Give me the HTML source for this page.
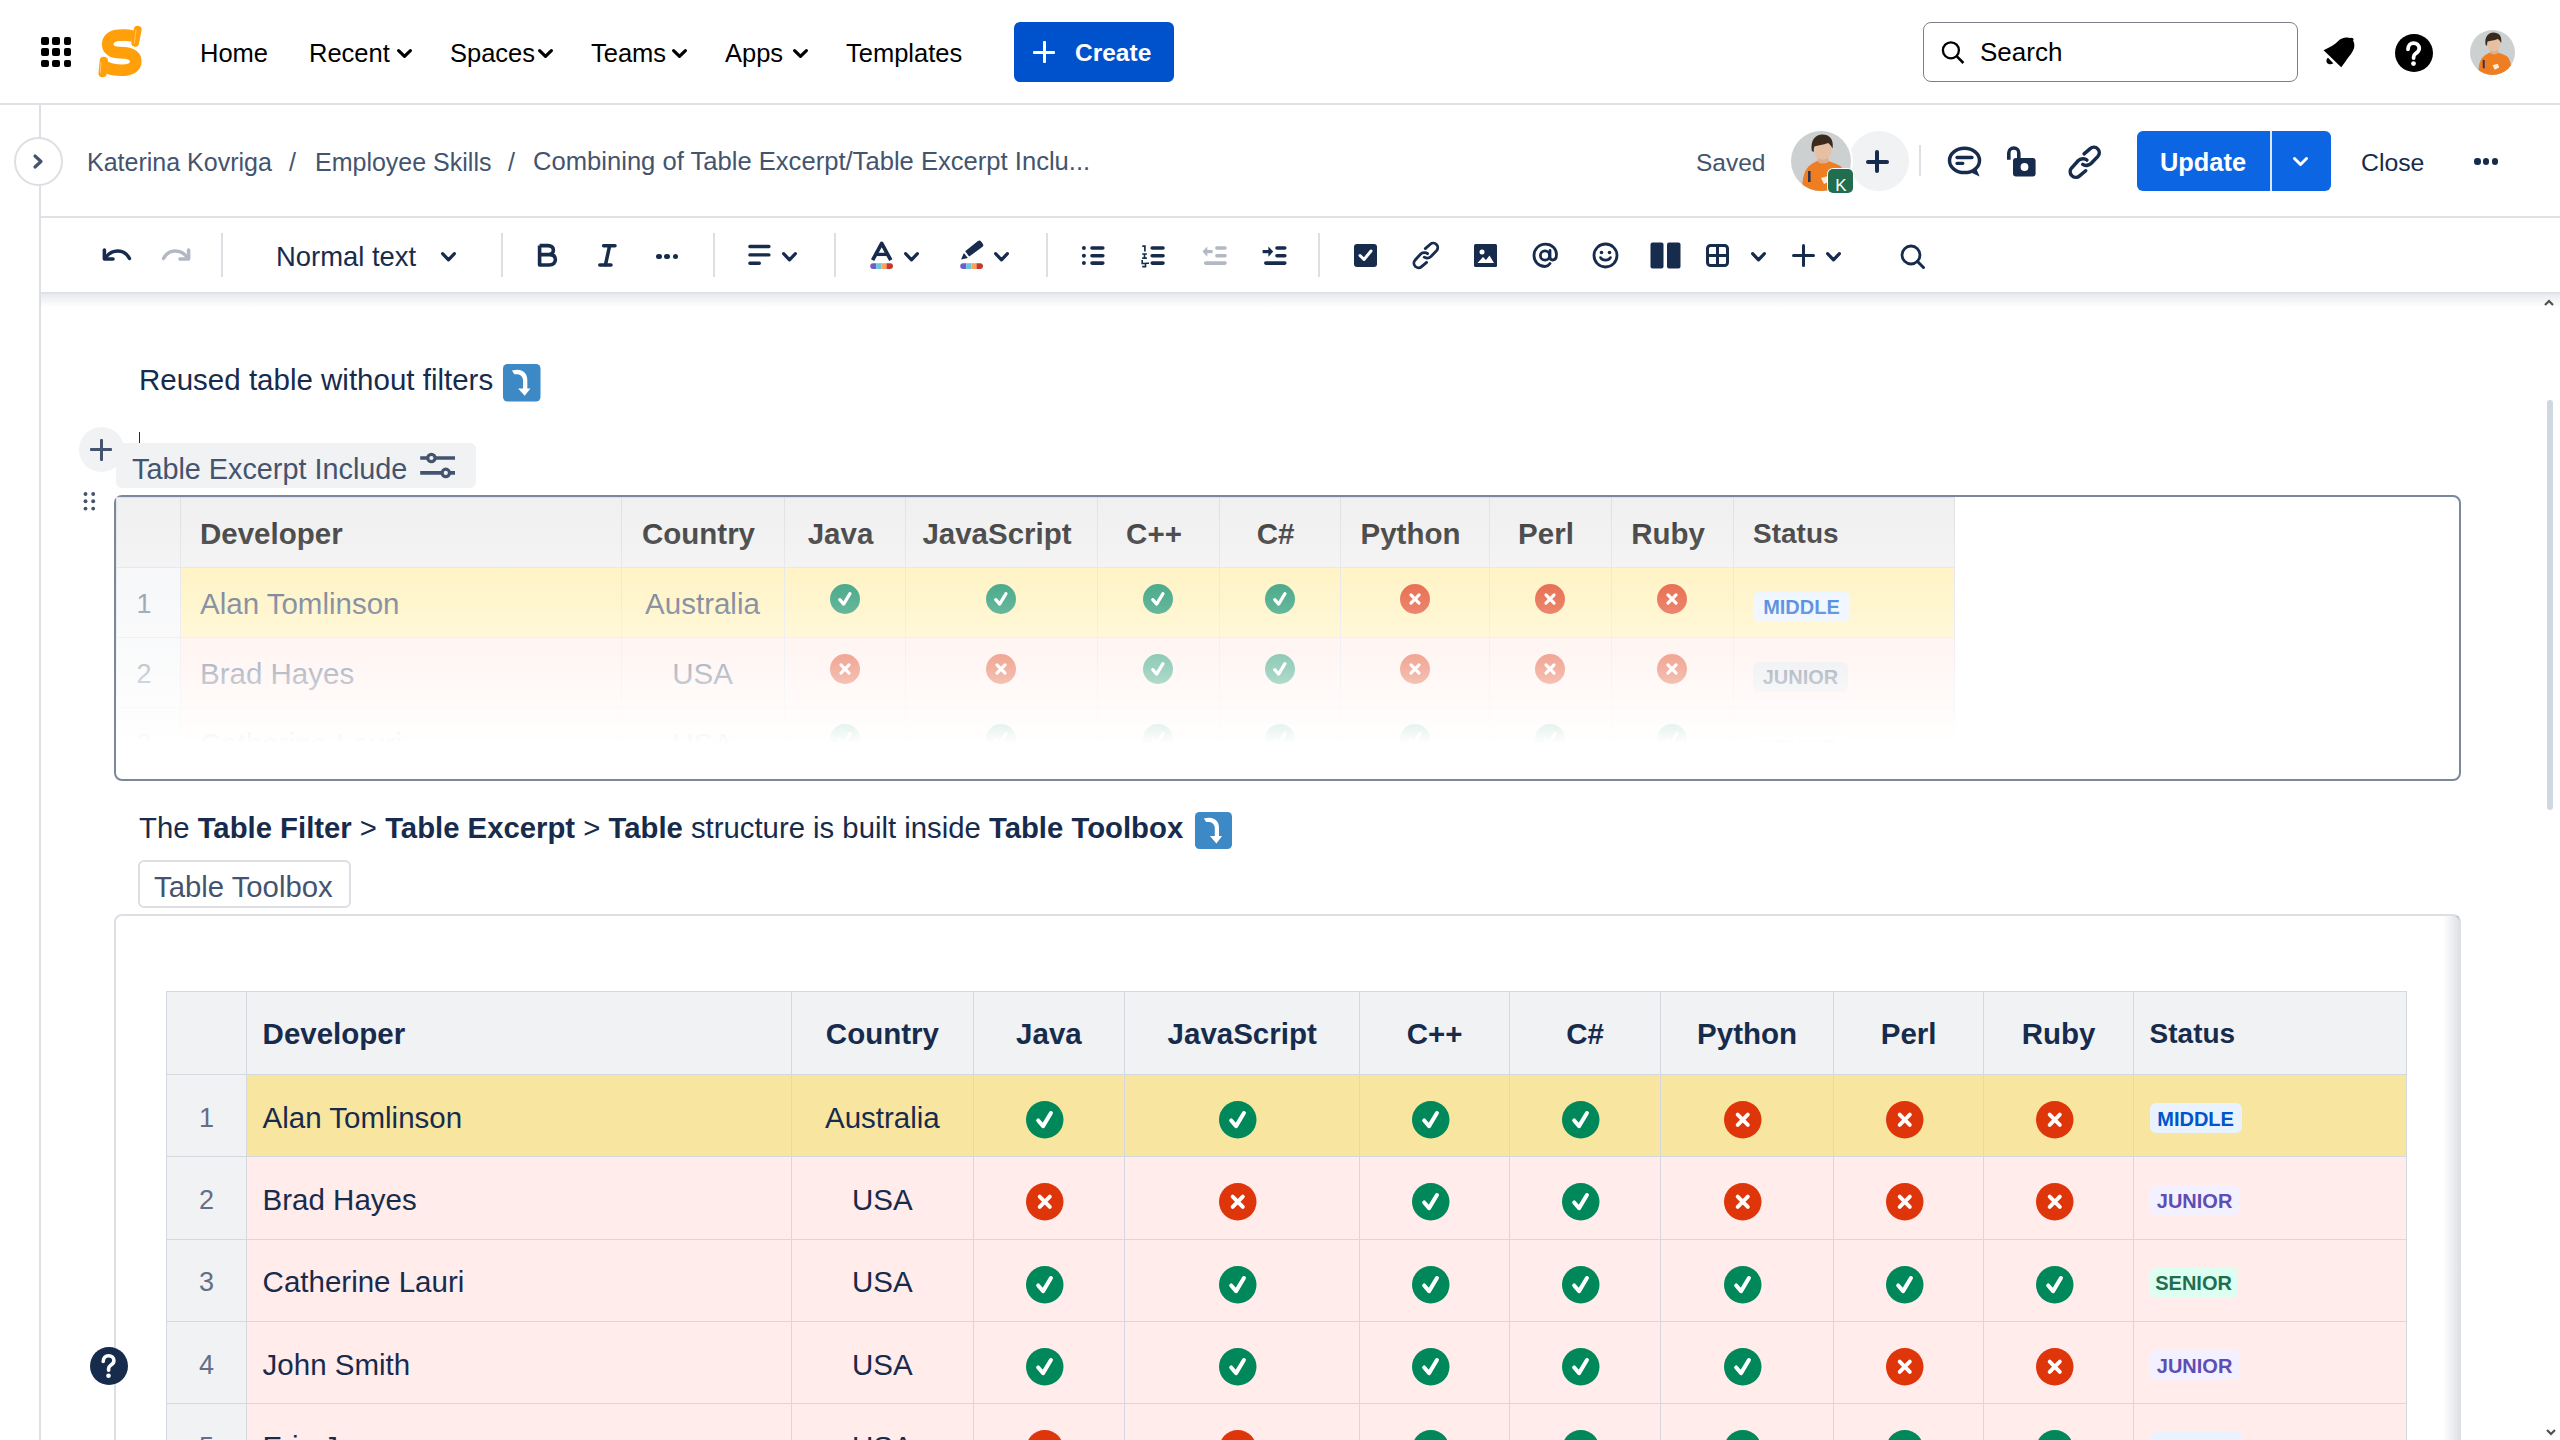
<!DOCTYPE html><html><head><meta charset="utf-8"><style>
*{box-sizing:border-box}
html,body{margin:0;padding:0;width:2560px;height:1440px;overflow:hidden;background:#fff;font-family:"Liberation Sans", sans-serif}
.t{position:absolute;white-space:pre}
.a{position:absolute}
svg{position:absolute;overflow:visible}
</style></head><body>
<div class="a" style="left:0;top:0;width:2560px;height:104px;background:#fff"></div>
<div class="a" style="left:0;top:103px;width:2560px;height:2px;background:#dfe1e6"></div>
<div class="a" style="left:41.0px;top:37.0px;width:7.5px;height:7.5px;border-radius:2px;background:#000"></div>
<div class="a" style="left:41.0px;top:48.3px;width:7.5px;height:7.5px;border-radius:2px;background:#000"></div>
<div class="a" style="left:41.0px;top:59.6px;width:7.5px;height:7.5px;border-radius:2px;background:#000"></div>
<div class="a" style="left:52.3px;top:37.0px;width:7.5px;height:7.5px;border-radius:2px;background:#000"></div>
<div class="a" style="left:52.3px;top:48.3px;width:7.5px;height:7.5px;border-radius:2px;background:#000"></div>
<div class="a" style="left:52.3px;top:59.6px;width:7.5px;height:7.5px;border-radius:2px;background:#000"></div>
<div class="a" style="left:63.6px;top:37.0px;width:7.5px;height:7.5px;border-radius:2px;background:#000"></div>
<div class="a" style="left:63.6px;top:48.3px;width:7.5px;height:7.5px;border-radius:2px;background:#000"></div>
<div class="a" style="left:63.6px;top:59.6px;width:7.5px;height:7.5px;border-radius:2px;background:#000"></div>
<svg style="left:92px;top:22px" width="56" height="60" viewBox="92 22 56 60"><g fill="none" stroke="#ff9f0a" stroke-linecap="round"><path d="M131 35.8 C127 34.5 123 35.2 119.5 35.2 C111 35.2 107.7 39.5 107.7 44.6 C107.7 50.2 113 52.6 120 52.6 C128 52.6 135.8 54.5 135.8 61.2 C135.8 67.2 130 70.2 122 70.2 C115.5 70.2 111 69.5 107 67.5" stroke-width="11.6"/><path d="M137.7 29.8 L135.2 42.8" stroke-width="7.8"/><path d="M103.8 60.8 L102.6 73.2" stroke-width="8.2"/></g><path d="M136.2 29 L134.2 44" stroke="#fff" stroke-width=".6" opacity=".7"/><path d="M101 62 L100.3 73" stroke="#fff" stroke-width=".6" opacity=".7"/></svg>
<div class="t" style="left:200px;top:41.41px;font-size:25.5px;line-height:25.5px;color:#000;font-weight:400;">Home</div>
<div class="t" style="left:309px;top:41.41px;font-size:25.5px;line-height:25.5px;color:#000;font-weight:400;">Recent</div>
<svg style="left:397px;top:49px" width="15" height="9" viewBox="0 0 15 9"><path d="M1.6 1.6 L7.5 7.4 L13.4 1.6" fill="none" stroke="#000" stroke-width="3.2" stroke-linecap="round" stroke-linejoin="round"/></svg>
<div class="t" style="left:450px;top:41.41px;font-size:25.5px;line-height:25.5px;color:#000;font-weight:400;">Spaces</div>
<svg style="left:538px;top:49px" width="15" height="9" viewBox="0 0 15 9"><path d="M1.6 1.6 L7.5 7.4 L13.4 1.6" fill="none" stroke="#000" stroke-width="3.2" stroke-linecap="round" stroke-linejoin="round"/></svg>
<div class="t" style="left:591px;top:41.41px;font-size:25.5px;line-height:25.5px;color:#000;font-weight:400;">Teams</div>
<svg style="left:672px;top:49px" width="15" height="9" viewBox="0 0 15 9"><path d="M1.6 1.6 L7.5 7.4 L13.4 1.6" fill="none" stroke="#000" stroke-width="3.2" stroke-linecap="round" stroke-linejoin="round"/></svg>
<div class="t" style="left:725px;top:41.41px;font-size:25.5px;line-height:25.5px;color:#000;font-weight:400;">Apps</div>
<svg style="left:793px;top:49px" width="15" height="9" viewBox="0 0 15 9"><path d="M1.6 1.6 L7.5 7.4 L13.4 1.6" fill="none" stroke="#000" stroke-width="3.2" stroke-linecap="round" stroke-linejoin="round"/></svg>
<div class="t" style="left:846px;top:41.41px;font-size:25.5px;line-height:25.5px;color:#000;font-weight:400;">Templates</div>
<div class="a" style="left:1014px;top:22px;width:160px;height:60px;border-radius:6px;background:#0052cc"></div>
<div class="a" style="left:1033px;top:50.5px;width:22px;height:3px;background:#fff;border-radius:1px"></div>
<div class="a" style="left:1042.5px;top:41px;width:3px;height:22px;background:#fff;border-radius:1px"></div>
<div class="t" style="left:1075px;top:41.26px;font-size:24.5px;line-height:24.5px;color:#fff;font-weight:700;">Create</div>
<div class="a" style="left:1923px;top:22px;width:375px;height:60px;border:1.5px solid #7a7f87;border-radius:8px;background:#fff"></div>
<svg style="left:1941px;top:40px" width="26" height="26" viewBox="0 0 26 26"><circle cx="9.9" cy="10.3" r="8" fill="none" stroke="#000" stroke-width="2.3"/><path d="M15.6 16.2 L22.4 23" stroke="#000" stroke-width="2.6" stroke-linecap="butt"/></svg>
<div class="t" style="left:1980px;top:39.49px;font-size:26px;line-height:26px;color:#000;font-weight:400;">Search</div>
<svg style="left:2318px;top:32px" width="42" height="40" viewBox="2318 32 42 40"><path d="M2323.6 50.2 C2330 47.2 2334.5 44.8 2338 41.2 C2341 38.4 2345 37 2348.5 37.8 L2350.8 37.9 L2353 40.4 C2354.7 43.2 2355 47 2352.8 51 C2350.5 55.2 2347.5 58 2345.5 61.5 L2341.2 67.3 Z" fill="#000"/><circle cx="2351.6" cy="39.6" r="1.9" fill="#000"/><path d="M2328 57.8 L2333.3 63.2 C2331 65 2327.8 64.6 2326.7 62.2 C2326 60.4 2326.6 58.8 2328 57.8 Z" fill="#000"/></svg>
<div class="a" style="left:2394.5px;top:33.5px;width:38px;height:38px;border-radius:50%;background:#000"></div>
<svg style="left:2394px;top:33px" width="40" height="40" viewBox="2394 33 40 40"><path d="M2408 49.3 C2408 45.5 2410.5 43.1 2413.6 43.1 C2416.8 43.1 2419.2 45.5 2419.2 48.6 C2419.2 51.2 2417.5 52.4 2415.6 53.6 C2414.2 54.5 2413.6 55.3 2413.6 57.2 L2413.6 58" fill="none" stroke="#fff" stroke-width="3.8" stroke-linecap="round"/><circle cx="2413.5" cy="63.6" r="2.4" fill="#fff"/></svg>
<svg style="left:2469.5px;top:29.5px" width="45" height="45" viewBox="0 0 60 60">
<defs><clipPath id="cp2492"><circle cx="30" cy="30" r="30"/></clipPath></defs>
<g clip-path="url(#cp2492)"><rect width="60" height="60" fill="#cdd0d1"/>
<path d="M11 62 C11 48 13 38 20 33.5 C23 31.5 26 29.5 29 29.5 L37 30 C41 31 46 33 50 35.5 C54 40 56 50 57 62 Z" fill="#ef7d22"/>
<path d="M26.5 24 L37 24 L37.5 31 C34 33 30 33 27 31 Z" fill="#dfae8c"/>
<ellipse cx="31.8" cy="19.2" rx="8.6" ry="9.6" fill="#e6c0a2"/>
<path d="M20.8 20 C19 8.5 25 3.4 31.2 3.4 C38.5 3.4 43 8 41.6 17.5 C40.5 15.5 39 13.2 37 12 C32 13.8 27 14.6 23.4 15.4 C22.8 17 22.8 18.8 22.8 21 Z" fill="#3a2a1e"/>
<rect x="17" y="40" width="2.6" height="11" fill="#2b3552"/>
<path d="M30 47 L37 45 L39 50 L33 53 Z" fill="#fff" opacity=".85"/>
</g></svg>
<div class="a" style="left:39px;top:105px;width:2px;height:1335px;background:#dcdfe4"></div>
<div class="a" style="left:13.5px;top:137px;width:49px;height:49px;border-radius:50%;border:2px solid #dcdfe4;background:#fff"></div>
<svg style="left:33px;top:154px" width="10" height="15" viewBox="0 0 10 15"><path d="M2 2 L8 7.5 L2 13" fill="none" stroke="#44546f" stroke-width="3.2" stroke-linecap="round" stroke-linejoin="round"/></svg>
<div class="a" style="left:41px;top:216px;width:2519px;height:2px;background:#dfe1e6"></div>
<div class="t" style="left:87px;top:149.84px;font-size:25px;line-height:25px;color:#44546f;font-weight:400;">Katerina Kovriga</div>
<div class="t" style="left:289px;top:149.84px;font-size:25px;line-height:25px;color:#44546f;font-weight:400;">/</div>
<div class="t" style="left:315px;top:149.84px;font-size:25px;line-height:25px;color:#44546f;font-weight:400;">Employee Skills</div>
<div class="t" style="left:508px;top:149.84px;font-size:25px;line-height:25px;color:#44546f;font-weight:400;">/</div>
<div class="t" style="left:533px;top:149.33px;font-size:25.6px;line-height:25.6px;color:#44546f;font-weight:400;">Combining of Table Excerpt/Table Excerpt Inclu...</div>
<div class="t" style="left:1696px;top:150.76px;font-size:24.5px;line-height:24.5px;color:#44546f;font-weight:400;">Saved</div>
<div class="a" style="left:1849px;top:131px;width:60px;height:60px;border-radius:50%;background:#f1f2f4"></div>
<div class="a" style="left:1866px;top:159.5px;width:22.5px;height:4px;background:#172b4d;border-radius:2px"></div>
<div class="a" style="left:1875.3px;top:150.2px;width:4px;height:22.5px;background:#172b4d;border-radius:2px"></div>
<div class="a" style="left:1789.0px;top:129.0px;width:64px;height:64px;border-radius:50%;background:#fff"></div><svg style="left:1791.0px;top:131.0px" width="60" height="60" viewBox="0 0 60 60">
<defs><clipPath id="cp1821"><circle cx="30" cy="30" r="30"/></clipPath></defs>
<g clip-path="url(#cp1821)"><rect width="60" height="60" fill="#cdd0d1"/>
<path d="M11 62 C11 48 13 38 20 33.5 C23 31.5 26 29.5 29 29.5 L37 30 C41 31 46 33 50 35.5 C54 40 56 50 57 62 Z" fill="#ef7d22"/>
<path d="M26.5 24 L37 24 L37.5 31 C34 33 30 33 27 31 Z" fill="#dfae8c"/>
<ellipse cx="31.8" cy="19.2" rx="8.6" ry="9.6" fill="#e6c0a2"/>
<path d="M20.8 20 C19 8.5 25 3.4 31.2 3.4 C38.5 3.4 43 8 41.6 17.5 C40.5 15.5 39 13.2 37 12 C32 13.8 27 14.6 23.4 15.4 C22.8 17 22.8 18.8 22.8 21 Z" fill="#3a2a1e"/>
<rect x="17" y="40" width="2.6" height="11" fill="#2b3552"/>
<path d="M30 47 L37 45 L39 50 L33 53 Z" fill="#fff" opacity=".85"/>
</g></svg>
<div class="a" style="left:1827px;top:168px;width:27px;height:26px;border-radius:6px;background:#fff"></div>
<div class="a" style="left:1828px;top:169px;width:25px;height:24px;border-radius:5px;background:#216e4e"></div>
<div class="t" style="left:1830.8px;width:20px;text-align:center;top:176.61px;font-size:17px;line-height:17px;color:#fff;font-weight:400;">K</div>
<div class="a" style="left:1918.5px;top:145px;width:2px;height:31px;background:#dcdfe4"></div>
<svg style="left:1940px;top:140px" width="46" height="42" viewBox="1940 140 46 42"><ellipse cx="1964.5" cy="160.4" rx="15" ry="12.2" fill="none" stroke="#172b4d" stroke-width="3.5"/><path d="M1969.5 171.8 L1979.6 176.6 L1976 168" fill="#172b4d"/><path d="M1957 157.5 H1972 M1957 163.3 H1962.8" stroke="#172b4d" stroke-width="3.3" stroke-linecap="round"/></svg>
<svg style="left:2000px;top:140px" width="40" height="42" viewBox="2000 140 40 42"><path d="M2008.8 159.8 V153 A5 5 0 0 1 2018.8 153 V158.5" fill="none" stroke="#172b4d" stroke-width="3.6"/><rect x="2013" y="157.9" width="22.6" height="18.6" rx="3" fill="#172b4d"/><circle cx="2024.5" cy="167" r="3.9" fill="#fff"/></svg>
<svg style="left:2062.5px;top:140.8px" width="43.92" height="41.48" viewBox="0 0 36 34"><g fill="none" stroke="#172b4d" stroke-width="2.9" stroke-linecap="round">
<path d="M17.3 10.6 L22.3 6.2 A4.5 4.5 0 0 1 28.6 12.6 L23.2 18.3 C21.2 20.3 18 20.5 16.2 19.2"/>
<path d="M18.6 24.4 L13.6 28.6 A4.6 4.6 0 0 1 7.2 22 L12.4 16.2 C14.4 14.2 17.8 14 19.6 15.6"/></g></svg>
<div class="a" style="left:2137px;top:131px;width:194px;height:60px;border-radius:6px;background:#0c66e4"></div>
<div class="a" style="left:2269.5px;top:131px;width:2px;height:60px;background:#fff;opacity:.85"></div>
<div class="t" style="left:2160px;top:150.00px;font-size:25.4px;line-height:25.4px;color:#fff;font-weight:700;">Update</div>
<svg style="left:2293px;top:157px" width="15" height="9" viewBox="0 0 15 9"><path d="M1.5 1.5 L7.5 7.5 L13.5 1.5" fill="none" stroke="#fff" stroke-width="3" stroke-linecap="round" stroke-linejoin="round"/></svg>
<div class="t" style="left:2361px;top:150.51px;font-size:24.8px;line-height:24.8px;color:#172b4d;font-weight:400;">Close</div>
<div class="a" style="left:2474.0px;top:158px;width:6.5px;height:6.5px;border-radius:50%;background:#172b4d"></div>
<div class="a" style="left:2482.8px;top:158px;width:6.5px;height:6.5px;border-radius:50%;background:#172b4d"></div>
<div class="a" style="left:2491.6px;top:158px;width:6.5px;height:6.5px;border-radius:50%;background:#172b4d"></div>
<div class="a" style="left:41px;top:292px;width:2519px;height:2px;background:#dfe1e6"></div>
<div class="a" style="left:41px;top:294px;width:2519px;height:13px;background:linear-gradient(#e9eaee,rgba(255,255,255,0))"></div>
<div class="a" style="left:221px;top:233px;width:2px;height:44px;background:#dcdfe4"></div>
<div class="a" style="left:501px;top:233px;width:2px;height:44px;background:#dcdfe4"></div>
<div class="a" style="left:712.5px;top:233px;width:2px;height:44px;background:#dcdfe4"></div>
<div class="a" style="left:834px;top:233px;width:2px;height:44px;background:#dcdfe4"></div>
<div class="a" style="left:1046px;top:233px;width:2px;height:44px;background:#dcdfe4"></div>
<div class="a" style="left:1318px;top:233px;width:2px;height:44px;background:#dcdfe4"></div>
<svg style="left:101px;top:242px" width="32" height="22" viewBox="0 0 32 22">
<path d="M5.5 14.5 C11 7.5 23 6 28.5 16.5" fill="none" stroke="#172b4d" stroke-width="3.4" stroke-linecap="round"/><path d="M3.4 8 L3.4 17 L12 17" fill="none" stroke="#172b4d" stroke-width="3.6" stroke-linecap="round" stroke-linejoin="round"/></svg>
<svg style="left:160px;top:242px" width="32" height="22" viewBox="0 0 32 22">
<path d="M26.5 14.5 C21 7.5 9 6 3.5 16.5" fill="none" stroke="#b3b9c4" stroke-width="3.4" stroke-linecap="round"/><path d="M28.6 8 L28.6 17 L20 17" fill="none" stroke="#b3b9c4" stroke-width="3.6" stroke-linecap="round" stroke-linejoin="round"/></svg>
<div class="t" style="left:276px;top:242.81px;font-size:27.4px;line-height:27.4px;color:#172b4d;font-weight:400;">Normal text</div>
<svg style="left:441px;top:252px" width="15" height="9.5" viewBox="0 0 15 9.5"><path d="M1.6 1.6 L7.5 7.9 L13.4 1.6" fill="none" stroke="#172b4d" stroke-width="3.2" stroke-linecap="round" stroke-linejoin="round"/></svg>
<svg style="left:536px;top:242px" width="22" height="26" viewBox="0 0 22 26"><path d="M3.6 3.6 L3.6 23 L13 23 C17.5 23 19.4 20.5 19.4 17.6 C19.4 14.6 17.3 12.6 13.5 12.6 L3.6 12.6 M3.6 3.6 L12 3.6 C15.6 3.6 17.4 5.6 17.4 8 C17.4 10.6 15.6 12.6 12.5 12.6" fill="none" stroke="#172b4d" stroke-width="3.6" stroke-linejoin="round"/></svg>
<svg style="left:596px;top:242px" width="23" height="26" viewBox="0 0 23 26"><path d="M7.6 3.8 H19 M3.8 23.1 H15 M13.6 3.8 L9.4 23.1" fill="none" stroke="#172b4d" stroke-width="3.5" stroke-linecap="round"/></svg>
<div class="a" style="left:656.0px;top:253.6px;width:5.6px;height:5.6px;border-radius:50%;background:#172b4d"></div>
<div class="a" style="left:664.3px;top:253.6px;width:5.6px;height:5.6px;border-radius:50%;background:#172b4d"></div>
<div class="a" style="left:672.6px;top:253.6px;width:5.6px;height:5.6px;border-radius:50%;background:#172b4d"></div>
<svg style="left:747px;top:245px" width="26" height="22" viewBox="0 0 26 22">
<path d="M2.9 1.5 H21.9 M2.9 9.9 H21.9 M2.9 18.2 H12.3" stroke="#172b4d" stroke-width="3.4" stroke-linecap="round"/></svg>
<svg style="left:782px;top:251.5px" width="15" height="9.5" viewBox="0 0 15 9.5"><path d="M1.6 1.6 L7.5 7.9 L13.4 1.6" fill="none" stroke="#172b4d" stroke-width="3.2" stroke-linecap="round" stroke-linejoin="round"/></svg>
<svg style="left:868px;top:240px" width="28" height="30" viewBox="0 0 28 30">
<path d="M4.6 20.2 L13.7 3.4 L22.8 20.2" fill="none" stroke="#172b4d" stroke-width="3.7" stroke-linejoin="round"/><path d="M7.8 14.4 H19.6" stroke="#172b4d" stroke-width="3.3"/>
<g transform="translate(0 23.2)"><g transform="translate(0 0)"><path d="M5.1 0 H8.2 V5.8 H5.1 A2.9 2.9 0 0 1 5.1 0 Z" fill="#6e5dc6"/><rect x="8.2" y="0" width="5.3" height="5.8" fill="#6cc3e0"/><rect x="13.5" y="0" width="5" height="5.8" fill="#fca15a"/><path d="M18.5 0 H22.1 A2.9 2.9 0 0 1 22.1 5.8 H18.5 Z" fill="#c9372c"/></g></g></svg>
<svg style="left:904px;top:251.5px" width="15" height="9.5" viewBox="0 0 15 9.5"><path d="M1.6 1.6 L7.5 7.9 L13.4 1.6" fill="none" stroke="#172b4d" stroke-width="3.2" stroke-linecap="round" stroke-linejoin="round"/></svg>
<svg style="left:958px;top:237px" width="28" height="33" viewBox="0 0 28 33">
<path d="M7.2 14.3 L19.6 4.3 A2.6 2.6 0 0 1 23.3 4.7 L24.6 6.4 A2.6 2.6 0 0 1 24.2 10.1 L11.2 19.6 Z" fill="#172b4d"/>
<path d="M5.9 15.9 L9.8 21 L3 22.6 Z" fill="#172b4d"/>
<g transform="translate(0 26.2)"><g transform="translate(0 0)"><path d="M5.1 0 H8.2 V5.8 H5.1 A2.9 2.9 0 0 1 5.1 0 Z" fill="#6e5dc6"/><rect x="8.2" y="0" width="5.3" height="5.8" fill="#6cc3e0"/><rect x="13.5" y="0" width="5" height="5.8" fill="#fca15a"/><path d="M18.5 0 H22.1 A2.9 2.9 0 0 1 22.1 5.8 H18.5 Z" fill="#c9372c"/></g></g></svg>
<svg style="left:994px;top:251.5px" width="15" height="9.5" viewBox="0 0 15 9.5"><path d="M1.6 1.6 L7.5 7.9 L13.4 1.6" fill="none" stroke="#172b4d" stroke-width="3.2" stroke-linecap="round" stroke-linejoin="round"/></svg>
<svg style="left:1078px;top:242px" width="30" height="26" viewBox="1078 242 30 26"><circle cx="1083.9" cy="248" r="2" fill="#172b4d"/><circle cx="1083.9" cy="255.7" r="2" fill="#172b4d"/><circle cx="1083.9" cy="263.1" r="2" fill="#172b4d"/><path d="M1092 248 H1102.8 M1092 255.7 H1102.8 M1092 263.1 H1102.8" stroke="#172b4d" stroke-width="3.6" stroke-linecap="round"/></svg>
<svg style="left:1138px;top:242px" width="30" height="28" viewBox="1138 242 30 28"><path d="M1142.3 246.2 H1144.9 V251.5" fill="none" stroke="#172b4d" stroke-width="1.7"/><path d="M1142.2 254 H1146.9 M1144.5 254 V258.1 M1142.2 258.1 H1146.9" fill="none" stroke="#172b4d" stroke-width="1.6"/><path d="M1142.2 260 V263.5 H1145.5 V266.6 H1142.2 M1145.5 263.3 H1149" fill="none" stroke="#172b4d" stroke-width="1.6"/><path d="M1152.2 248 H1163 M1152.2 255.7 H1163 M1152.2 263.1 H1163" stroke="#172b4d" stroke-width="3.6" stroke-linecap="round"/></svg>
<svg style="left:1200px;top:242px" width="30" height="26" viewBox="1200 242 30 26"><path d="M1212.6 251.6 H1206" stroke="#b3b9c4" stroke-width="3.2"/><path d="M1202.5 251.6 L1207.3 246.4 L1207.3 256.8 Z" fill="#b3b9c4"/><path d="M1216.9 248 H1225 M1216.9 255.7 H1225 M1205.7 263.1 H1225" stroke="#b3b9c4" stroke-width="3.6" stroke-linecap="round"/></svg>
<svg style="left:1260px;top:242px" width="30" height="26" viewBox="1260 242 30 26"><path d="M1262.6 251.6 H1269" stroke="#172b4d" stroke-width="3.2"/><path d="M1273.2 251.6 L1268.4 246.4 L1268.4 256.8 Z" fill="#172b4d"/><path d="M1277 248 H1284.8 M1277 255.7 H1284.8 M1265.8 263.1 H1284.8" stroke="#172b4d" stroke-width="3.6" stroke-linecap="round"/></svg>
<svg style="left:1354px;top:244px" width="23" height="23" viewBox="0 0 23 23"><rect x="0" y="0" width="23" height="23" rx="3" fill="#172b4d"/><path d="M6 11.5 L10 15.5 L17 7" fill="none" stroke="#fff" stroke-width="3" stroke-linecap="round" stroke-linejoin="round"/></svg>
<svg style="left:1408px;top:238px" width="36" height="34" viewBox="0 0 36 34"><g fill="none" stroke="#172b4d" stroke-width="2.8" stroke-linecap="round">
<path d="M17.3 10.6 L22.3 6.2 A4.5 4.5 0 0 1 28.6 12.6 L23.2 18.3 C21.2 20.3 18 20.5 16.2 19.2"/>
<path d="M18.6 24.4 L13.6 28.6 A4.6 4.6 0 0 1 7.2 22 L12.4 16.2 C14.4 14.2 17.8 14 19.6 15.6"/></g></svg>
<svg style="left:1474px;top:244px" width="23" height="23" viewBox="0 0 23 23"><rect width="23" height="23" rx="1.5" fill="#172b4d"/><circle cx="8" cy="8" r="2.5" fill="#fff"/><path d="M3.5 19 L9 13 L12 16 L15.5 11.5 L20 19 Z" fill="#fff"/></svg>
<svg style="left:1532px;top:242px" width="27" height="27" viewBox="0 0 27 27"><path d="M18 21.5 C16.5 23.5 14.5 24.5 13 24.5 C6.5 24.5 2 19.5 2 13.5 C2 7.5 6.5 2.2 13.5 2.2 C20 2.2 24.5 7 24.5 12.5 C24.5 16.5 22.5 18 20.5 18 C18.5 18 18 16.5 18 15 L18 8.5" fill="none" stroke="#172b4d" stroke-width="2.8" stroke-linecap="round"/><circle cx="13" cy="13.5" r="4.6" fill="none" stroke="#172b4d" stroke-width="2.8"/></svg>
<svg style="left:1592px;top:242px" width="27" height="27" viewBox="0 0 27 27"><circle cx="13.5" cy="13.5" r="11.5" fill="none" stroke="#172b4d" stroke-width="2.8"/><circle cx="9.5" cy="10.5" r="1.8" fill="#172b4d"/><circle cx="17.5" cy="10.5" r="1.8" fill="#172b4d"/><path d="M8.5 15.5 C10.5 19 16.5 19 18.5 15.5" fill="none" stroke="#172b4d" stroke-width="2.6" stroke-linecap="round"/></svg>
<svg style="left:1650px;top:242px" width="31" height="27" viewBox="0 0 31 27"><rect x="0.5" y="0.5" width="13" height="26" rx="2" fill="#172b4d"/><rect x="17" y="0.5" width="13.5" height="26" rx="2" fill="#172b4d"/></svg>
<svg style="left:1706px;top:244px" width="23" height="23" viewBox="0 0 23 23"><rect x="1.5" y="1.5" width="20" height="20" rx="3" fill="none" stroke="#172b4d" stroke-width="3"/><path d="M11.5 2 V21 M2 11.5 H21" stroke="#172b4d" stroke-width="3"/></svg>
<svg style="left:1751px;top:252px" width="15" height="9.5" viewBox="0 0 15 9.5"><path d="M1.6 1.6 L7.5 7.9 L13.4 1.6" fill="none" stroke="#172b4d" stroke-width="3.2" stroke-linecap="round" stroke-linejoin="round"/></svg>
<div class="a" style="left:1792px;top:253.8px;width:22.5px;height:3.2px;background:#172b4d;border-radius:2px"></div>
<div class="a" style="left:1801.6px;top:244px;width:3.2px;height:22.5px;background:#172b4d;border-radius:2px"></div>
<svg style="left:1826px;top:252px" width="15" height="9.5" viewBox="0 0 15 9.5"><path d="M1.6 1.6 L7.5 7.9 L13.4 1.6" fill="none" stroke="#172b4d" stroke-width="3.2" stroke-linecap="round" stroke-linejoin="round"/></svg>
<svg style="left:1900px;top:244px" width="26" height="26" viewBox="0 0 26 26"><circle cx="11" cy="11" r="9" fill="none" stroke="#172b4d" stroke-width="2.8"/><path d="M17.5 17.5 L23.5 23.5" stroke="#172b4d" stroke-width="3" stroke-linecap="round"/></svg>
<svg style="left:2541px;top:296px" width="16" height="12" viewBox="0 0 16 12"><path d="M4 9 L8 5 L12 9" fill="none" stroke="#505050" stroke-width="2.2"/></svg>
<div class="a" style="left:2547px;top:400px;width:6px;height:410px;border-radius:3px;background:#cfd8e0"></div>
<svg style="left:2542.5px;top:1425.5px" width="16" height="12" viewBox="0 0 16 12"><path d="M4 4 L8 8 L12 4" fill="none" stroke="#505050" stroke-width="2.2"/></svg>
<div class="t" style="left:139px;top:365.03px;font-size:29.5px;line-height:29.5px;color:#172b4d;font-weight:400;">Reused table without filters</div>
<svg style="left:503px;top:364px" width="37.5" height="37.5" viewBox="0 0 37 37"><rect width="37" height="37" rx="4.5" fill="#3d89c6"/>
<path d="M8.8 6.4 C14 5 19.5 5.2 22.4 9.8 C23.6 11.6 24 14 24 16.5 L24 24.1 L27.1 24.1 L21.4 31.4 L14.9 24.1 L19.8 24.1 L19.8 16.5 C19.8 12.5 17.2 10 13.5 10 L11.2 10 Z" fill="#fff"/></svg>
<div class="a" style="left:78.5px;top:427px;width:45px;height:45px;border-radius:50%;background:#f1f2f4"></div>
<div class="a" style="left:90px;top:448px;width:22px;height:3px;background:#44546f;border-radius:1px"></div>
<div class="a" style="left:99.5px;top:438.5px;width:3px;height:22px;background:#44546f;border-radius:1px"></div>
<div class="a" style="left:116px;top:443px;width:360px;height:45px;border-radius:6px;background:#f1f2f4"></div>
<div class="a" style="left:139px;top:432px;width:1.3px;height:11px;background:#172b4d"></div>
<div class="t" style="left:132px;top:454.62px;font-size:28.8px;line-height:28.8px;color:#44546f;font-weight:400;">Table Excerpt Include</div>
<svg style="left:418px;top:448px" width="42" height="34" viewBox="418 448 42 34"><path d="M2.2 458 H37 M2.2 472.9 H37" transform="translate(418 0)" stroke="#44546f" stroke-width="3.6"/><circle cx="431.4" cy="458" r="3.7" fill="#f1f2f4" stroke="#44546f" stroke-width="3.2"/><circle cx="445.8" cy="472.9" r="3.7" fill="#f1f2f4" stroke="#44546f" stroke-width="3.2"/></svg>
<svg style="left:80px;top:488px" width="20" height="28" viewBox="80 488 20 28"><circle cx="85.5" cy="494.0" r="1.95" fill="#44546f"/><circle cx="85.5" cy="501.3" r="1.95" fill="#44546f"/><circle cx="85.5" cy="508.6" r="1.95" fill="#44546f"/><circle cx="93.2" cy="494.0" r="1.95" fill="#44546f"/><circle cx="93.2" cy="501.3" r="1.95" fill="#44546f"/><circle cx="93.2" cy="508.6" r="1.95" fill="#44546f"/></svg>
<div class="a" style="left:114px;top:495px;width:2347px;height:286px;border:2px solid #7b879a;border-radius:8px;background:#fff"></div>
<div class="a" style="left:116px;top:497px;width:2343px;height:247px;overflow:hidden">
<div class="a" style="left:-116px;top:-497px;width:2560px;height:1440px">
<div class="a" style="left:116px;top:497px;width:1838px;height:70px;background:#f0f0f0"></div>
<div class="a" style="left:116px;top:567px;width:64px;height:70px;background:#f4f5f7"></div>
<div class="a" style="left:180px;top:567px;width:1774px;height:70px;background:#fff0b3"></div>
<div class="a" style="left:116px;top:637px;width:64px;height:70px;background:#f4f5f7"></div>
<div class="a" style="left:180px;top:637px;width:1774px;height:70px;background:#ffebe6"></div>
<div class="a" style="left:116px;top:707px;width:64px;height:70px;background:#f4f5f7"></div>
<div class="a" style="left:180px;top:707px;width:1774px;height:70px;background:#ffebe6"></div>
<div class="a" style="left:116px;top:497px;width:1px;height:280px;background:#dfe1e6"></div>
<div class="a" style="left:180px;top:497px;width:1px;height:280px;background:#dfe1e6"></div>
<div class="a" style="left:621px;top:497px;width:1px;height:280px;background:#dfe1e6"></div>
<div class="a" style="left:784px;top:497px;width:1px;height:280px;background:#dfe1e6"></div>
<div class="a" style="left:905px;top:497px;width:1px;height:280px;background:#dfe1e6"></div>
<div class="a" style="left:1097px;top:497px;width:1px;height:280px;background:#dfe1e6"></div>
<div class="a" style="left:1219px;top:497px;width:1px;height:280px;background:#dfe1e6"></div>
<div class="a" style="left:1340px;top:497px;width:1px;height:280px;background:#dfe1e6"></div>
<div class="a" style="left:1489px;top:497px;width:1px;height:280px;background:#dfe1e6"></div>
<div class="a" style="left:1611px;top:497px;width:1px;height:280px;background:#dfe1e6"></div>
<div class="a" style="left:1733px;top:497px;width:1px;height:280px;background:#dfe1e6"></div>
<div class="a" style="left:1954px;top:497px;width:1px;height:280px;background:#dfe1e6"></div>
<div class="a" style="left:116px;top:497px;width:1839px;height:1px;background:#dfe1e6"></div>
<div class="a" style="left:116px;top:567px;width:1839px;height:1px;background:#dfe1e6"></div>
<div class="a" style="left:116px;top:637px;width:1839px;height:1px;background:#dfe1e6"></div>
<div class="a" style="left:116px;top:707px;width:1839px;height:1px;background:#dfe1e6"></div>
<div class="a" style="left:116px;top:777px;width:1839px;height:1px;background:#dfe1e6"></div>
<div class="t" style="left:200px;top:518.53px;font-size:29.5px;line-height:29.5px;color:#333333;font-weight:700;">Developer</div>
<div class="t" style="left:598.5px;width:200px;text-align:center;top:518.53px;font-size:29.5px;line-height:29.5px;color:#333333;font-weight:700;">Country</div>
<div class="t" style="left:720.5px;width:240px;text-align:center;top:518.53px;font-size:29.5px;line-height:29.5px;color:#333333;font-weight:700;">Java</div>
<div class="t" style="left:877.0px;width:240px;text-align:center;top:518.53px;font-size:29.5px;line-height:29.5px;color:#333333;font-weight:700;">JavaScript</div>
<div class="t" style="left:1034.0px;width:240px;text-align:center;top:518.53px;font-size:29.5px;line-height:29.5px;color:#333333;font-weight:700;">C++</div>
<div class="t" style="left:1155.5px;width:240px;text-align:center;top:518.53px;font-size:29.5px;line-height:29.5px;color:#333333;font-weight:700;">C#</div>
<div class="t" style="left:1290.5px;width:240px;text-align:center;top:518.53px;font-size:29.5px;line-height:29.5px;color:#333333;font-weight:700;">Python</div>
<div class="t" style="left:1426.0px;width:240px;text-align:center;top:518.53px;font-size:29.5px;line-height:29.5px;color:#333333;font-weight:700;">Perl</div>
<div class="t" style="left:1548.0px;width:240px;text-align:center;top:518.53px;font-size:29.5px;line-height:29.5px;color:#333333;font-weight:700;">Ruby</div>
<div class="t" style="left:1753px;top:519.80px;font-size:28px;line-height:28px;color:#333333;font-weight:700;">Status</div>
<div class="t" style="left:114.0px;width:60px;text-align:center;top:590.64px;font-size:27px;line-height:27px;color:#6b778c;font-weight:400;">1</div>
<div class="t" style="left:200px;top:588.53px;font-size:29.5px;line-height:29.5px;color:#42526e;font-weight:400;">Alan Tomlinson</div>
<div class="t" style="left:602.5px;width:200px;text-align:center;top:588.53px;font-size:29.5px;line-height:29.5px;color:#42526e;font-weight:400;">Australia</div>
<svg style="left:829.5px;top:584.0px" width="30" height="30" viewBox="0 0 40 40"><circle cx="20" cy="20" r="20" fill="#00875a"/><path d="M13 20.8 L18.2 26.8 L26.6 12.8" fill="none" stroke="#fff" stroke-width="4.3" stroke-linecap="round" stroke-linejoin="round"/></svg>
<svg style="left:986.0px;top:584.0px" width="30" height="30" viewBox="0 0 40 40"><circle cx="20" cy="20" r="20" fill="#00875a"/><path d="M13 20.8 L18.2 26.8 L26.6 12.8" fill="none" stroke="#fff" stroke-width="4.3" stroke-linecap="round" stroke-linejoin="round"/></svg>
<svg style="left:1143.0px;top:584.0px" width="30" height="30" viewBox="0 0 40 40"><circle cx="20" cy="20" r="20" fill="#00875a"/><path d="M13 20.8 L18.2 26.8 L26.6 12.8" fill="none" stroke="#fff" stroke-width="4.3" stroke-linecap="round" stroke-linejoin="round"/></svg>
<svg style="left:1264.5px;top:584.0px" width="30" height="30" viewBox="0 0 40 40"><circle cx="20" cy="20" r="20" fill="#00875a"/><path d="M13 20.8 L18.2 26.8 L26.6 12.8" fill="none" stroke="#fff" stroke-width="4.3" stroke-linecap="round" stroke-linejoin="round"/></svg>
<svg style="left:1399.5px;top:584.0px" width="30" height="30" viewBox="0 0 40 40"><circle cx="20" cy="20" r="20" fill="#de350b"/><path d="M14.6 14.6 L25.4 25.4 M25.4 14.6 L14.6 25.4" fill="none" stroke="#fff" stroke-width="4.2" stroke-linecap="round"/></svg>
<svg style="left:1535.0px;top:584.0px" width="30" height="30" viewBox="0 0 40 40"><circle cx="20" cy="20" r="20" fill="#de350b"/><path d="M14.6 14.6 L25.4 25.4 M25.4 14.6 L14.6 25.4" fill="none" stroke="#fff" stroke-width="4.2" stroke-linecap="round"/></svg>
<svg style="left:1657.0px;top:584.0px" width="30" height="30" viewBox="0 0 40 40"><circle cx="20" cy="20" r="20" fill="#de350b"/><path d="M14.6 14.6 L25.4 25.4 M25.4 14.6 L14.6 25.4" fill="none" stroke="#fff" stroke-width="4.2" stroke-linecap="round"/></svg>
<div class="a" style="left:1753px;top:592.0px;width:97px;height:30px;border-radius:6px;background:#e9f2ff"></div>
<div class="t" style="left:1753.0px;width:97px;text-align:center;top:597.37px;font-size:20px;line-height:20px;color:#0055cc;font-weight:700;">MIDDLE</div>
<div class="t" style="left:114.0px;width:60px;text-align:center;top:660.64px;font-size:27px;line-height:27px;color:#6b778c;font-weight:400;">2</div>
<div class="t" style="left:200px;top:658.53px;font-size:29.5px;line-height:29.5px;color:#42526e;font-weight:400;">Brad Hayes</div>
<div class="t" style="left:602.5px;width:200px;text-align:center;top:658.53px;font-size:29.5px;line-height:29.5px;color:#42526e;font-weight:400;">USA</div>
<svg style="left:829.5px;top:654.0px" width="30" height="30" viewBox="0 0 40 40"><circle cx="20" cy="20" r="20" fill="#de350b"/><path d="M14.6 14.6 L25.4 25.4 M25.4 14.6 L14.6 25.4" fill="none" stroke="#fff" stroke-width="4.2" stroke-linecap="round"/></svg>
<svg style="left:986.0px;top:654.0px" width="30" height="30" viewBox="0 0 40 40"><circle cx="20" cy="20" r="20" fill="#de350b"/><path d="M14.6 14.6 L25.4 25.4 M25.4 14.6 L14.6 25.4" fill="none" stroke="#fff" stroke-width="4.2" stroke-linecap="round"/></svg>
<svg style="left:1143.0px;top:654.0px" width="30" height="30" viewBox="0 0 40 40"><circle cx="20" cy="20" r="20" fill="#00875a"/><path d="M13 20.8 L18.2 26.8 L26.6 12.8" fill="none" stroke="#fff" stroke-width="4.3" stroke-linecap="round" stroke-linejoin="round"/></svg>
<svg style="left:1264.5px;top:654.0px" width="30" height="30" viewBox="0 0 40 40"><circle cx="20" cy="20" r="20" fill="#00875a"/><path d="M13 20.8 L18.2 26.8 L26.6 12.8" fill="none" stroke="#fff" stroke-width="4.3" stroke-linecap="round" stroke-linejoin="round"/></svg>
<svg style="left:1399.5px;top:654.0px" width="30" height="30" viewBox="0 0 40 40"><circle cx="20" cy="20" r="20" fill="#de350b"/><path d="M14.6 14.6 L25.4 25.4 M25.4 14.6 L14.6 25.4" fill="none" stroke="#fff" stroke-width="4.2" stroke-linecap="round"/></svg>
<svg style="left:1535.0px;top:654.0px" width="30" height="30" viewBox="0 0 40 40"><circle cx="20" cy="20" r="20" fill="#de350b"/><path d="M14.6 14.6 L25.4 25.4 M25.4 14.6 L14.6 25.4" fill="none" stroke="#fff" stroke-width="4.2" stroke-linecap="round"/></svg>
<svg style="left:1657.0px;top:654.0px" width="30" height="30" viewBox="0 0 40 40"><circle cx="20" cy="20" r="20" fill="#de350b"/><path d="M14.6 14.6 L25.4 25.4 M25.4 14.6 L14.6 25.4" fill="none" stroke="#fff" stroke-width="4.2" stroke-linecap="round"/></svg>
<div class="a" style="left:1753px;top:662.0px;width:95px;height:30px;border-radius:6px;background:#dfe1e6"></div>
<div class="t" style="left:1753.0px;width:95px;text-align:center;top:667.37px;font-size:20px;line-height:20px;color:#42526e;font-weight:700;">JUNIOR</div>
<div class="t" style="left:114.0px;width:60px;text-align:center;top:730.64px;font-size:27px;line-height:27px;color:#6b778c;font-weight:400;">3</div>
<div class="t" style="left:200px;top:728.53px;font-size:29.5px;line-height:29.5px;color:#42526e;font-weight:400;">Catherine Lauri</div>
<div class="t" style="left:602.5px;width:200px;text-align:center;top:728.53px;font-size:29.5px;line-height:29.5px;color:#42526e;font-weight:400;">USA</div>
<svg style="left:829.5px;top:724.0px" width="30" height="30" viewBox="0 0 40 40"><circle cx="20" cy="20" r="20" fill="#00875a"/><path d="M13 20.8 L18.2 26.8 L26.6 12.8" fill="none" stroke="#fff" stroke-width="4.3" stroke-linecap="round" stroke-linejoin="round"/></svg>
<svg style="left:986.0px;top:724.0px" width="30" height="30" viewBox="0 0 40 40"><circle cx="20" cy="20" r="20" fill="#00875a"/><path d="M13 20.8 L18.2 26.8 L26.6 12.8" fill="none" stroke="#fff" stroke-width="4.3" stroke-linecap="round" stroke-linejoin="round"/></svg>
<svg style="left:1143.0px;top:724.0px" width="30" height="30" viewBox="0 0 40 40"><circle cx="20" cy="20" r="20" fill="#00875a"/><path d="M13 20.8 L18.2 26.8 L26.6 12.8" fill="none" stroke="#fff" stroke-width="4.3" stroke-linecap="round" stroke-linejoin="round"/></svg>
<svg style="left:1264.5px;top:724.0px" width="30" height="30" viewBox="0 0 40 40"><circle cx="20" cy="20" r="20" fill="#00875a"/><path d="M13 20.8 L18.2 26.8 L26.6 12.8" fill="none" stroke="#fff" stroke-width="4.3" stroke-linecap="round" stroke-linejoin="round"/></svg>
<svg style="left:1399.5px;top:724.0px" width="30" height="30" viewBox="0 0 40 40"><circle cx="20" cy="20" r="20" fill="#00875a"/><path d="M13 20.8 L18.2 26.8 L26.6 12.8" fill="none" stroke="#fff" stroke-width="4.3" stroke-linecap="round" stroke-linejoin="round"/></svg>
<svg style="left:1535.0px;top:724.0px" width="30" height="30" viewBox="0 0 40 40"><circle cx="20" cy="20" r="20" fill="#00875a"/><path d="M13 20.8 L18.2 26.8 L26.6 12.8" fill="none" stroke="#fff" stroke-width="4.3" stroke-linecap="round" stroke-linejoin="round"/></svg>
<svg style="left:1657.0px;top:724.0px" width="30" height="30" viewBox="0 0 40 40"><circle cx="20" cy="20" r="20" fill="#00875a"/><path d="M13 20.8 L18.2 26.8 L26.6 12.8" fill="none" stroke="#fff" stroke-width="4.3" stroke-linecap="round" stroke-linejoin="round"/></svg>
<div class="a" style="left:1753px;top:732.0px;width:93px;height:30px;border-radius:6px;background:#dcfff1"></div>
<div class="t" style="left:1753.0px;width:93px;text-align:center;top:737.37px;font-size:20px;line-height:20px;color:#216e4e;font-weight:700;">SENIOR</div>
</div>
<div class="a" style="left:0;top:0;width:2343px;height:247px;background:linear-gradient(to bottom, rgba(255,255,255,0) 0px, rgba(255,255,255,0.13) 36px, rgba(255,255,255,0.35) 102px, rgba(255,255,255,0.62) 172px, rgba(255,255,255,1) 247px)"></div>
</div>
<div class="t" style="left:139px;top:813.33px;font-size:29.3px;line-height:29.3px;color:#172b4d">The <b>Table Filter</b> &gt; <b>Table Excerpt</b> &gt; <b>Table</b> structure is built inside <b>Table Toolbox</b></div>
<svg style="left:1195px;top:812px" width="37" height="37" viewBox="0 0 37 37"><rect width="37" height="37" rx="4.5" fill="#3d89c6"/>
<path d="M8.8 6.4 C14 5 19.5 5.2 22.4 9.8 C23.6 11.6 24 14 24 16.5 L24 24.1 L27.1 24.1 L21.4 31.4 L14.9 24.1 L19.8 24.1 L19.8 16.5 C19.8 12.5 17.2 10 13.5 10 L11.2 10 Z" fill="#fff"/></svg>
<div class="a" style="left:137.5px;top:860px;width:213px;height:48px;border:2px solid #dcdfe4;border-radius:6px;background:#fff"></div>
<div class="t" style="left:154px;top:872.20px;font-size:29.3px;line-height:29.3px;color:#44546f;font-weight:400;">Table Toolbox</div>
<div class="a" style="left:114px;top:914px;width:2347px;height:600px;border:2px solid #dcdfe4;border-radius:8px;background:#fff"></div>
<div class="a" style="left:166.5px;top:991.5px;width:2240.2px;height:83px;background:#f1f2f4"></div>
<div class="a" style="left:166.5px;top:1074.5px;width:80.1px;height:82.33px;background:#f1f2f4"></div>
<div class="a" style="left:246.6px;top:1074.5px;width:2160.1px;height:82.33px;background:#f8e6a0"></div>
<div class="a" style="left:166.5px;top:1156.83px;width:80.1px;height:82.33px;background:#f1f2f4"></div>
<div class="a" style="left:246.6px;top:1156.83px;width:2160.1px;height:82.33px;background:#ffeceb"></div>
<div class="a" style="left:166.5px;top:1239.16px;width:80.1px;height:82.33px;background:#f1f2f4"></div>
<div class="a" style="left:246.6px;top:1239.16px;width:2160.1px;height:82.33px;background:#ffeceb"></div>
<div class="a" style="left:166.5px;top:1321.49px;width:80.1px;height:82.33px;background:#f1f2f4"></div>
<div class="a" style="left:246.6px;top:1321.49px;width:2160.1px;height:82.33px;background:#ffeceb"></div>
<div class="a" style="left:166.5px;top:1403.82px;width:80.1px;height:82.33px;background:#f1f2f4"></div>
<div class="a" style="left:246.6px;top:1403.82px;width:2160.1px;height:82.33px;background:#ffeceb"></div>
<div class="a" style="left:166px;top:991px;width:1px;height:494.65px;background:#d5d8de"></div>
<div class="a" style="left:246px;top:991px;width:1px;height:494.65px;background:#d5d8de"></div>
<div class="a" style="left:791px;top:991px;width:1px;height:494.65px;background:#d5d8de"></div>
<div class="a" style="left:973px;top:991px;width:1px;height:494.65px;background:#d5d8de"></div>
<div class="a" style="left:1124px;top:991px;width:1px;height:494.65px;background:#d5d8de"></div>
<div class="a" style="left:1359px;top:991px;width:1px;height:494.65px;background:#d5d8de"></div>
<div class="a" style="left:1509px;top:991px;width:1px;height:494.65px;background:#d5d8de"></div>
<div class="a" style="left:1660px;top:991px;width:1px;height:494.65px;background:#d5d8de"></div>
<div class="a" style="left:1833px;top:991px;width:1px;height:494.65px;background:#d5d8de"></div>
<div class="a" style="left:1983px;top:991px;width:1px;height:494.65px;background:#d5d8de"></div>
<div class="a" style="left:2133px;top:991px;width:1px;height:494.65px;background:#d5d8de"></div>
<div class="a" style="left:2406px;top:991px;width:1px;height:494.65px;background:#d5d8de"></div>
<div class="a" style="left:166px;top:991px;width:2241.2px;height:1px;background:#d5d8de"></div>
<div class="a" style="left:166px;top:1074px;width:2241.2px;height:1px;background:#d5d8de"></div>
<div class="a" style="left:166px;top:1156px;width:2241.2px;height:1px;background:#d5d8de"></div>
<div class="a" style="left:166px;top:1239px;width:2241.2px;height:1px;background:#d5d8de"></div>
<div class="a" style="left:166px;top:1321px;width:2241.2px;height:1px;background:#d5d8de"></div>
<div class="a" style="left:166px;top:1403px;width:2241.2px;height:1px;background:#d5d8de"></div>
<div class="a" style="left:166px;top:1486px;width:2241.2px;height:1px;background:#d5d8de"></div>
<div class="t" style="left:262.6px;top:1019.03px;font-size:29.5px;line-height:29.5px;color:#172b4d;font-weight:700;">Developer</div>
<div class="t" style="left:782.4px;width:200px;text-align:center;top:1019.03px;font-size:29.5px;line-height:29.5px;color:#172b4d;font-weight:700;">Country</div>
<div class="t" style="left:928.9499999999998px;width:240px;text-align:center;top:1019.03px;font-size:29.5px;line-height:29.5px;color:#172b4d;font-weight:700;">Java</div>
<div class="t" style="left:1122.1999999999998px;width:240px;text-align:center;top:1019.03px;font-size:29.5px;line-height:29.5px;color:#172b4d;font-weight:700;">JavaScript</div>
<div class="t" style="left:1314.6999999999998px;width:240px;text-align:center;top:1019.03px;font-size:29.5px;line-height:29.5px;color:#172b4d;font-weight:700;">C++</div>
<div class="t" style="left:1465.0px;width:240px;text-align:center;top:1019.03px;font-size:29.5px;line-height:29.5px;color:#172b4d;font-weight:700;">C#</div>
<div class="t" style="left:1627.1px;width:240px;text-align:center;top:1019.03px;font-size:29.5px;line-height:29.5px;color:#172b4d;font-weight:700;">Python</div>
<div class="t" style="left:1788.65px;width:240px;text-align:center;top:1019.03px;font-size:29.5px;line-height:29.5px;color:#172b4d;font-weight:700;">Perl</div>
<div class="t" style="left:1938.5500000000002px;width:240px;text-align:center;top:1019.03px;font-size:29.5px;line-height:29.5px;color:#172b4d;font-weight:700;">Ruby</div>
<div class="t" style="left:2149.6px;top:1020.30px;font-size:28px;line-height:28px;color:#172b4d;font-weight:700;">Status</div>
<div class="t" style="left:176.55px;width:60px;text-align:center;top:1104.81px;font-size:27px;line-height:27px;color:#626f86;font-weight:400;">1</div>
<div class="t" style="left:262.6px;top:1102.69px;font-size:29.5px;line-height:29.5px;color:#172b4d;font-weight:400;">Alan Tomlinson</div>
<div class="t" style="left:782.4px;width:200px;text-align:center;top:1102.69px;font-size:29.5px;line-height:29.5px;color:#172b4d;font-weight:400;">Australia</div>
<svg style="left:1026.1999999999998px;top:1100.915px" width="37.5" height="37.5" viewBox="0 0 40 40"><circle cx="20" cy="20" r="20" fill="#00875a"/><path d="M13 20.8 L18.2 26.8 L26.6 12.8" fill="none" stroke="#fff" stroke-width="4.3" stroke-linecap="round" stroke-linejoin="round"/></svg>
<svg style="left:1219.4499999999998px;top:1100.915px" width="37.5" height="37.5" viewBox="0 0 40 40"><circle cx="20" cy="20" r="20" fill="#00875a"/><path d="M13 20.8 L18.2 26.8 L26.6 12.8" fill="none" stroke="#fff" stroke-width="4.3" stroke-linecap="round" stroke-linejoin="round"/></svg>
<svg style="left:1411.9499999999998px;top:1100.915px" width="37.5" height="37.5" viewBox="0 0 40 40"><circle cx="20" cy="20" r="20" fill="#00875a"/><path d="M13 20.8 L18.2 26.8 L26.6 12.8" fill="none" stroke="#fff" stroke-width="4.3" stroke-linecap="round" stroke-linejoin="round"/></svg>
<svg style="left:1562.25px;top:1100.915px" width="37.5" height="37.5" viewBox="0 0 40 40"><circle cx="20" cy="20" r="20" fill="#00875a"/><path d="M13 20.8 L18.2 26.8 L26.6 12.8" fill="none" stroke="#fff" stroke-width="4.3" stroke-linecap="round" stroke-linejoin="round"/></svg>
<svg style="left:1724.35px;top:1100.915px" width="37.5" height="37.5" viewBox="0 0 40 40"><circle cx="20" cy="20" r="20" fill="#de350b"/><path d="M14.6 14.6 L25.4 25.4 M25.4 14.6 L14.6 25.4" fill="none" stroke="#fff" stroke-width="4.2" stroke-linecap="round"/></svg>
<svg style="left:1885.9px;top:1100.915px" width="37.5" height="37.5" viewBox="0 0 40 40"><circle cx="20" cy="20" r="20" fill="#de350b"/><path d="M14.6 14.6 L25.4 25.4 M25.4 14.6 L14.6 25.4" fill="none" stroke="#fff" stroke-width="4.2" stroke-linecap="round"/></svg>
<svg style="left:2035.8000000000002px;top:1100.915px" width="37.5" height="37.5" viewBox="0 0 40 40"><circle cx="20" cy="20" r="20" fill="#de350b"/><path d="M14.6 14.6 L25.4 25.4 M25.4 14.6 L14.6 25.4" fill="none" stroke="#fff" stroke-width="4.2" stroke-linecap="round"/></svg>
<div class="a" style="left:2149.6px;top:1103.165px;width:92px;height:30px;border-radius:6px;background:#e9f2ff"></div>
<div class="t" style="left:2149.6px;width:92px;text-align:center;top:1108.53px;font-size:20px;line-height:20px;color:#0055cc;font-weight:700;">MIDDLE</div>
<div class="t" style="left:176.55px;width:60px;text-align:center;top:1187.14px;font-size:27px;line-height:27px;color:#626f86;font-weight:400;">2</div>
<div class="t" style="left:262.6px;top:1185.02px;font-size:29.5px;line-height:29.5px;color:#172b4d;font-weight:400;">Brad Hayes</div>
<div class="t" style="left:782.4px;width:200px;text-align:center;top:1185.02px;font-size:29.5px;line-height:29.5px;color:#172b4d;font-weight:400;">USA</div>
<svg style="left:1026.1999999999998px;top:1183.245px" width="37.5" height="37.5" viewBox="0 0 40 40"><circle cx="20" cy="20" r="20" fill="#de350b"/><path d="M14.6 14.6 L25.4 25.4 M25.4 14.6 L14.6 25.4" fill="none" stroke="#fff" stroke-width="4.2" stroke-linecap="round"/></svg>
<svg style="left:1219.4499999999998px;top:1183.245px" width="37.5" height="37.5" viewBox="0 0 40 40"><circle cx="20" cy="20" r="20" fill="#de350b"/><path d="M14.6 14.6 L25.4 25.4 M25.4 14.6 L14.6 25.4" fill="none" stroke="#fff" stroke-width="4.2" stroke-linecap="round"/></svg>
<svg style="left:1411.9499999999998px;top:1183.245px" width="37.5" height="37.5" viewBox="0 0 40 40"><circle cx="20" cy="20" r="20" fill="#00875a"/><path d="M13 20.8 L18.2 26.8 L26.6 12.8" fill="none" stroke="#fff" stroke-width="4.3" stroke-linecap="round" stroke-linejoin="round"/></svg>
<svg style="left:1562.25px;top:1183.245px" width="37.5" height="37.5" viewBox="0 0 40 40"><circle cx="20" cy="20" r="20" fill="#00875a"/><path d="M13 20.8 L18.2 26.8 L26.6 12.8" fill="none" stroke="#fff" stroke-width="4.3" stroke-linecap="round" stroke-linejoin="round"/></svg>
<svg style="left:1724.35px;top:1183.245px" width="37.5" height="37.5" viewBox="0 0 40 40"><circle cx="20" cy="20" r="20" fill="#de350b"/><path d="M14.6 14.6 L25.4 25.4 M25.4 14.6 L14.6 25.4" fill="none" stroke="#fff" stroke-width="4.2" stroke-linecap="round"/></svg>
<svg style="left:1885.9px;top:1183.245px" width="37.5" height="37.5" viewBox="0 0 40 40"><circle cx="20" cy="20" r="20" fill="#de350b"/><path d="M14.6 14.6 L25.4 25.4 M25.4 14.6 L14.6 25.4" fill="none" stroke="#fff" stroke-width="4.2" stroke-linecap="round"/></svg>
<svg style="left:2035.8000000000002px;top:1183.245px" width="37.5" height="37.5" viewBox="0 0 40 40"><circle cx="20" cy="20" r="20" fill="#de350b"/><path d="M14.6 14.6 L25.4 25.4 M25.4 14.6 L14.6 25.4" fill="none" stroke="#fff" stroke-width="4.2" stroke-linecap="round"/></svg>
<div class="a" style="left:2149.6px;top:1185.495px;width:90px;height:30px;border-radius:6px;background:#f3f0ff"></div>
<div class="t" style="left:2149.6px;width:90px;text-align:center;top:1190.86px;font-size:20px;line-height:20px;color:#5e4db2;font-weight:700;">JUNIOR</div>
<div class="t" style="left:176.55px;width:60px;text-align:center;top:1269.47px;font-size:27px;line-height:27px;color:#626f86;font-weight:400;">3</div>
<div class="t" style="left:262.6px;top:1267.35px;font-size:29.5px;line-height:29.5px;color:#172b4d;font-weight:400;">Catherine Lauri</div>
<div class="t" style="left:782.4px;width:200px;text-align:center;top:1267.35px;font-size:29.5px;line-height:29.5px;color:#172b4d;font-weight:400;">USA</div>
<svg style="left:1026.1999999999998px;top:1265.575px" width="37.5" height="37.5" viewBox="0 0 40 40"><circle cx="20" cy="20" r="20" fill="#00875a"/><path d="M13 20.8 L18.2 26.8 L26.6 12.8" fill="none" stroke="#fff" stroke-width="4.3" stroke-linecap="round" stroke-linejoin="round"/></svg>
<svg style="left:1219.4499999999998px;top:1265.575px" width="37.5" height="37.5" viewBox="0 0 40 40"><circle cx="20" cy="20" r="20" fill="#00875a"/><path d="M13 20.8 L18.2 26.8 L26.6 12.8" fill="none" stroke="#fff" stroke-width="4.3" stroke-linecap="round" stroke-linejoin="round"/></svg>
<svg style="left:1411.9499999999998px;top:1265.575px" width="37.5" height="37.5" viewBox="0 0 40 40"><circle cx="20" cy="20" r="20" fill="#00875a"/><path d="M13 20.8 L18.2 26.8 L26.6 12.8" fill="none" stroke="#fff" stroke-width="4.3" stroke-linecap="round" stroke-linejoin="round"/></svg>
<svg style="left:1562.25px;top:1265.575px" width="37.5" height="37.5" viewBox="0 0 40 40"><circle cx="20" cy="20" r="20" fill="#00875a"/><path d="M13 20.8 L18.2 26.8 L26.6 12.8" fill="none" stroke="#fff" stroke-width="4.3" stroke-linecap="round" stroke-linejoin="round"/></svg>
<svg style="left:1724.35px;top:1265.575px" width="37.5" height="37.5" viewBox="0 0 40 40"><circle cx="20" cy="20" r="20" fill="#00875a"/><path d="M13 20.8 L18.2 26.8 L26.6 12.8" fill="none" stroke="#fff" stroke-width="4.3" stroke-linecap="round" stroke-linejoin="round"/></svg>
<svg style="left:1885.9px;top:1265.575px" width="37.5" height="37.5" viewBox="0 0 40 40"><circle cx="20" cy="20" r="20" fill="#00875a"/><path d="M13 20.8 L18.2 26.8 L26.6 12.8" fill="none" stroke="#fff" stroke-width="4.3" stroke-linecap="round" stroke-linejoin="round"/></svg>
<svg style="left:2035.8000000000002px;top:1265.575px" width="37.5" height="37.5" viewBox="0 0 40 40"><circle cx="20" cy="20" r="20" fill="#00875a"/><path d="M13 20.8 L18.2 26.8 L26.6 12.8" fill="none" stroke="#fff" stroke-width="4.3" stroke-linecap="round" stroke-linejoin="round"/></svg>
<div class="a" style="left:2149.6px;top:1267.825px;width:88px;height:30px;border-radius:6px;background:#dcfff1"></div>
<div class="t" style="left:2149.6px;width:88px;text-align:center;top:1273.19px;font-size:20px;line-height:20px;color:#216e4e;font-weight:700;">SENIOR</div>
<div class="t" style="left:176.55px;width:60px;text-align:center;top:1351.80px;font-size:27px;line-height:27px;color:#626f86;font-weight:400;">4</div>
<div class="t" style="left:262.6px;top:1349.68px;font-size:29.5px;line-height:29.5px;color:#172b4d;font-weight:400;">John Smith</div>
<div class="t" style="left:782.4px;width:200px;text-align:center;top:1349.68px;font-size:29.5px;line-height:29.5px;color:#172b4d;font-weight:400;">USA</div>
<svg style="left:1026.1999999999998px;top:1347.905px" width="37.5" height="37.5" viewBox="0 0 40 40"><circle cx="20" cy="20" r="20" fill="#00875a"/><path d="M13 20.8 L18.2 26.8 L26.6 12.8" fill="none" stroke="#fff" stroke-width="4.3" stroke-linecap="round" stroke-linejoin="round"/></svg>
<svg style="left:1219.4499999999998px;top:1347.905px" width="37.5" height="37.5" viewBox="0 0 40 40"><circle cx="20" cy="20" r="20" fill="#00875a"/><path d="M13 20.8 L18.2 26.8 L26.6 12.8" fill="none" stroke="#fff" stroke-width="4.3" stroke-linecap="round" stroke-linejoin="round"/></svg>
<svg style="left:1411.9499999999998px;top:1347.905px" width="37.5" height="37.5" viewBox="0 0 40 40"><circle cx="20" cy="20" r="20" fill="#00875a"/><path d="M13 20.8 L18.2 26.8 L26.6 12.8" fill="none" stroke="#fff" stroke-width="4.3" stroke-linecap="round" stroke-linejoin="round"/></svg>
<svg style="left:1562.25px;top:1347.905px" width="37.5" height="37.5" viewBox="0 0 40 40"><circle cx="20" cy="20" r="20" fill="#00875a"/><path d="M13 20.8 L18.2 26.8 L26.6 12.8" fill="none" stroke="#fff" stroke-width="4.3" stroke-linecap="round" stroke-linejoin="round"/></svg>
<svg style="left:1724.35px;top:1347.905px" width="37.5" height="37.5" viewBox="0 0 40 40"><circle cx="20" cy="20" r="20" fill="#00875a"/><path d="M13 20.8 L18.2 26.8 L26.6 12.8" fill="none" stroke="#fff" stroke-width="4.3" stroke-linecap="round" stroke-linejoin="round"/></svg>
<svg style="left:1885.9px;top:1347.905px" width="37.5" height="37.5" viewBox="0 0 40 40"><circle cx="20" cy="20" r="20" fill="#de350b"/><path d="M14.6 14.6 L25.4 25.4 M25.4 14.6 L14.6 25.4" fill="none" stroke="#fff" stroke-width="4.2" stroke-linecap="round"/></svg>
<svg style="left:2035.8000000000002px;top:1347.905px" width="37.5" height="37.5" viewBox="0 0 40 40"><circle cx="20" cy="20" r="20" fill="#de350b"/><path d="M14.6 14.6 L25.4 25.4 M25.4 14.6 L14.6 25.4" fill="none" stroke="#fff" stroke-width="4.2" stroke-linecap="round"/></svg>
<div class="a" style="left:2149.6px;top:1350.155px;width:90px;height:30px;border-radius:6px;background:#f3f0ff"></div>
<div class="t" style="left:2149.6px;width:90px;text-align:center;top:1355.52px;font-size:20px;line-height:20px;color:#5e4db2;font-weight:700;">JUNIOR</div>
<div class="t" style="left:176.55px;width:60px;text-align:center;top:1434.13px;font-size:27px;line-height:27px;color:#626f86;font-weight:400;">5</div>
<div class="t" style="left:262.6px;top:1432.01px;font-size:29.5px;line-height:29.5px;color:#172b4d;font-weight:400;">Erin Jones</div>
<div class="t" style="left:782.4px;width:200px;text-align:center;top:1432.01px;font-size:29.5px;line-height:29.5px;color:#172b4d;font-weight:400;">USA</div>
<svg style="left:1026.1999999999998px;top:1430.235px" width="37.5" height="37.5" viewBox="0 0 40 40"><circle cx="20" cy="20" r="20" fill="#de350b"/><path d="M14.6 14.6 L25.4 25.4 M25.4 14.6 L14.6 25.4" fill="none" stroke="#fff" stroke-width="4.2" stroke-linecap="round"/></svg>
<svg style="left:1219.4499999999998px;top:1430.235px" width="37.5" height="37.5" viewBox="0 0 40 40"><circle cx="20" cy="20" r="20" fill="#de350b"/><path d="M14.6 14.6 L25.4 25.4 M25.4 14.6 L14.6 25.4" fill="none" stroke="#fff" stroke-width="4.2" stroke-linecap="round"/></svg>
<svg style="left:1411.9499999999998px;top:1430.235px" width="37.5" height="37.5" viewBox="0 0 40 40"><circle cx="20" cy="20" r="20" fill="#00875a"/><path d="M13 20.8 L18.2 26.8 L26.6 12.8" fill="none" stroke="#fff" stroke-width="4.3" stroke-linecap="round" stroke-linejoin="round"/></svg>
<svg style="left:1562.25px;top:1430.235px" width="37.5" height="37.5" viewBox="0 0 40 40"><circle cx="20" cy="20" r="20" fill="#00875a"/><path d="M13 20.8 L18.2 26.8 L26.6 12.8" fill="none" stroke="#fff" stroke-width="4.3" stroke-linecap="round" stroke-linejoin="round"/></svg>
<svg style="left:1724.35px;top:1430.235px" width="37.5" height="37.5" viewBox="0 0 40 40"><circle cx="20" cy="20" r="20" fill="#00875a"/><path d="M13 20.8 L18.2 26.8 L26.6 12.8" fill="none" stroke="#fff" stroke-width="4.3" stroke-linecap="round" stroke-linejoin="round"/></svg>
<svg style="left:1885.9px;top:1430.235px" width="37.5" height="37.5" viewBox="0 0 40 40"><circle cx="20" cy="20" r="20" fill="#00875a"/><path d="M13 20.8 L18.2 26.8 L26.6 12.8" fill="none" stroke="#fff" stroke-width="4.3" stroke-linecap="round" stroke-linejoin="round"/></svg>
<svg style="left:2035.8000000000002px;top:1430.235px" width="37.5" height="37.5" viewBox="0 0 40 40"><circle cx="20" cy="20" r="20" fill="#00875a"/><path d="M13 20.8 L18.2 26.8 L26.6 12.8" fill="none" stroke="#fff" stroke-width="4.3" stroke-linecap="round" stroke-linejoin="round"/></svg>
<div class="a" style="left:2149.6px;top:1432.485px;width:92px;height:30px;border-radius:6px;background:#e9f2ff"></div>
<div class="t" style="left:2149.6px;width:92px;text-align:center;top:1437.85px;font-size:20px;line-height:20px;color:#0055cc;font-weight:700;">MIDDLE</div>
<div class="a" style="left:2443px;top:916px;width:16px;height:530px;background:linear-gradient(to right, rgba(9,30,66,0), rgba(9,30,66,0.13))"></div>
<div class="a" style="left:89.5px;top:1347px;width:38px;height:38px;border-radius:50%;background:#172b4d"></div>
<svg style="left:85px;top:1340px" width="48" height="50" viewBox="85 1340 48 50"><path d="M103.2 1361.5 C103.2 1357.9 105.5 1355.7 108.6 1355.7 C111.6 1355.7 113.9 1357.9 113.9 1360.8 C113.9 1363.2 112.3 1364.4 110.5 1365.5 C109.2 1366.3 108.6 1367.1 108.6 1368.8 L108.6 1370.3" fill="none" stroke="#fff" stroke-width="3.6" stroke-linecap="round"/><circle cx="108.5" cy="1375.8" r="2.3" fill="#fff"/></svg>
</body></html>
